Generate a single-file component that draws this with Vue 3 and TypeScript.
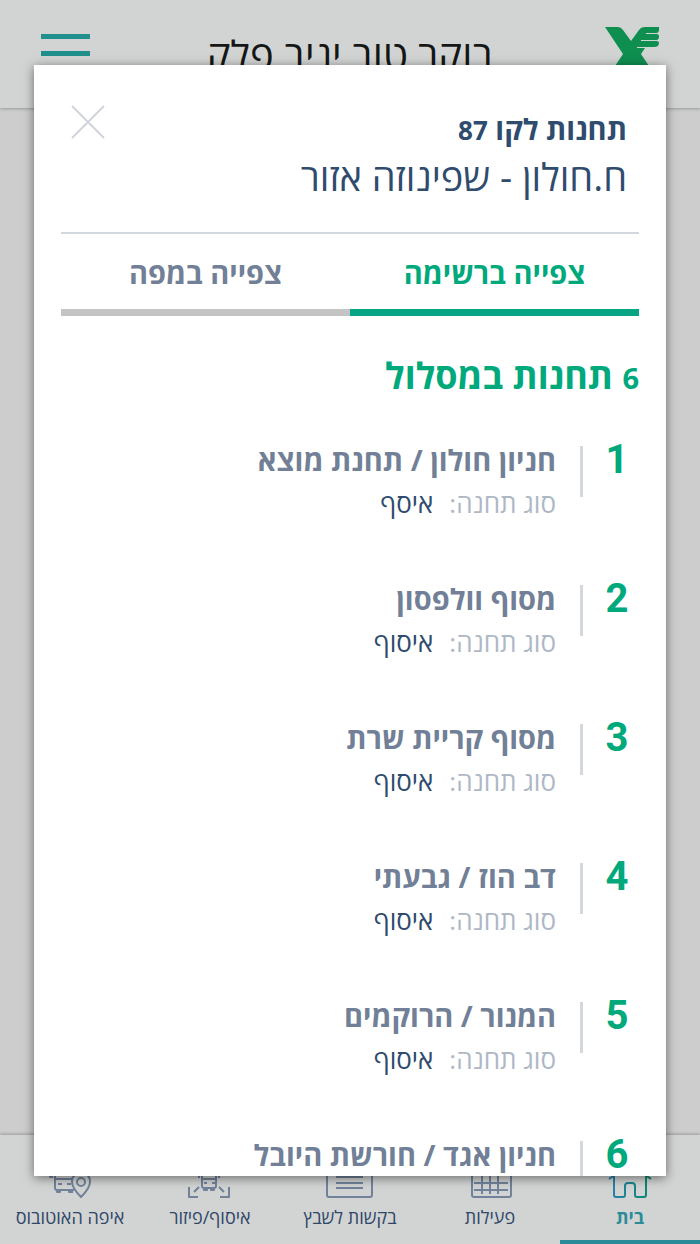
<script setup lang="ts">
import { ref } from 'vue'

interface Stop {
  name: string
  type?: string
}

const stops: Stop[] = [
  { name: 'חניון חולון / תחנת מוצא', type: 'איסף' },
  { name: 'מסוף וולפסון', type: 'איסוף' },
  { name: 'מסוף קריית שרת', type: 'איסוף' },
  { name: 'דב הוז / גבעתי', type: 'איסוף' },
  { name: 'המנור / הרוקמים', type: 'איסוף' },
  { name: 'חניון אגד / חורשת היובל' },
]

const view = ref<'list' | 'map'>('list')
</script>

<template>
  <div class="page" dir="rtl">
    <header class="topbar">
      <svg class="logo" viewBox="0 0 56 50" aria-hidden="true">
        <path d="M1 0H14Q17 0 19 3L27 14L35 3Q37 0 41 0H55V3Q55 6 51 6.500Q55 7 55 9V10Q55 13 51 13.500Q55 14 55 16Q55 20 50 20H41V21L37 27L51 48H37L28 42L19 48H5L19 27Z" fill="#0e8f50" />
        <path d="M42 6.500H55M37 13.500H55M33 20.500H42" stroke="#d2d4d3" stroke-width="1" />
      </svg>
      <h1 class="greeting">בוקר טוב יניב פלק</h1>
      <button class="menu" type="button" aria-label="תפריט">
        <span></span><span></span><span></span>
      </button>
    </header>

    <main class="backdrop"></main>

    <nav class="bottom">
      <a href="#home" class="active">
        <svg viewBox="0 0 44 36" aria-hidden="true">
          <defs>
            <linearGradient id="home-line" x1="0" x2="1" y1="0" y2="0">
              <stop offset="0" stop-color="#2c7fb0" /><stop offset="1" stop-color="#078b69" />
            </linearGradient>
          </defs>
          <path d="M1 17L22 2L43 17M6 12V33Q6 35 8 35H15Q17 35 17 33V24Q17 21 20 21H24Q27 21 27 24V33Q27 35 29 35H36Q38 35 38 33V12" stroke="url(#home-line)" />
        </svg>
        <span>בית</span>
      </a>
      <a href="#activities">
        <svg viewBox="0 0 44 36" aria-hidden="true">
          <path d="M6 4H41Q43 4 43 6V33Q43 35 41 35H6Q4 35 4 33V6Q4 4 6 4ZM4 11H43M6 21H40M6 28H40M14 14V32M22 14V32M30 14V32" />
        </svg>
        <span>פעילות</span>
      </a>
      <a href="#requests">
        <svg class="wide" viewBox="0 0 48 36" aria-hidden="true">
          <path d="M3 2H44Q46 2 46 4V33Q46 35 44 35H3Q1 35 1 33V4Q1 2 3 2ZM10 9H37M10 15H37M10 21H37M10 26H37" />
        </svg>
        <span>בקשות לשבץ</span>
      </a>
      <a href="#pickup">
        <svg viewBox="0 0 44 36" aria-hidden="true">
          <path d="M1 11V2H10M32 2H41V11M1 25V35H10M6 30L11 25M41 25V35H32M36 30L31 25M14 6H28V24Q28 26 26 26H16Q14 26 14 24ZM14 17H28M16 21H19M24 21H27M16 26V28H19V26M23 26V28H26V26M11 12V16M31 12V16" />
        </svg>
        <span>איסוף/פיזור</span>
      </a>
      <a href="#where">
        <svg viewBox="0 0 44 36" aria-hidden="true">
          <path d="M26 28H9Q7 28 7 26V7H26M7 17H24M10 22H14M19 22H23M9 28V30H12V28M21 28V30H25M2 11V15H5M33 35Q24 26 24 20Q24 11 33 11Q42 11 42 20Q42 26 33 35Z" />
          <circle cx="33" cy="20" r="4" />
        </svg>
        <span>איפה האוטובוס</span>
      </a>
    </nav>

    <section class="dialog" role="dialog" aria-modal="true" aria-labelledby="line-title">
      <div class="head">
        <div>
          <h2 id="line-title" class="title">תחנות לקו <span class="digits">87</span></h2>
          <p class="route">ח.חולון - שפינוזה אזור</p>
        </div>
        <button class="close" type="button" aria-label="סגירה">
          <svg viewBox="0 0 34 34" aria-hidden="true"><path d="M1 1L33 33M33 1L1 33" /></svg>
        </button>
      </div>
      <div class="tabs" role="tablist">
        <button type="button" role="tab" :class="{ selected: view === 'list' }" :aria-selected="view === 'list'" @click="view = 'list'">צפייה ברשימה</button>
        <button type="button" role="tab" :class="{ selected: view === 'map' }" :aria-selected="view === 'map'" @click="view = 'map'">צפייה במפה</button>
      </div>
      <h3 class="count"><span class="digits">{{ stops.length }}</span> תחנות במסלול</h3>
      <ol class="stops">
        <li v-for="(stop, i) in stops" :key="stop.name">
          <span class="number">{{ i + 1 }}</span>
          <div class="info">
            <h4>{{ stop.name }}</h4>
            <p v-if="stop.type"><span class="label">סוג תחנה:</span><span>{{ stop.type }}</span></p>
          </div>
        </li>
      </ol>
    </section>
  </div>
</template>

<style>
body {
  margin: 0;
  background: #cdcdcd;
}
</style>

<style scoped>
* {
  box-sizing: border-box;
  margin: 0;
  padding: 0;
}
.page {
  position: relative;
  display: flex;
  flex-direction: column;
  height: 100vh;
  overflow: hidden;
  color: #2f4b6e;
  font-family: "Open Sans", "Noto Sans", "Liberation Sans", sans-serif;
}
button {
  border: 0;
  background: none;
  font: inherit;
  cursor: pointer;
}
.topbar {
  display: grid;
  grid-template-columns: 60px 1fr 60px;
  align-items: start;
  height: 108px;
  padding: 27px 40px 0;
  background: #d2d4d3;
  box-shadow: 0 1px 3px rgba(0, 0, 0, 0.25);
}
.logo {
  width: 56px;
  height: 50px;
}
.greeting {
  color: #151716;
  font-size: 40px;
  font-weight: 400;
  line-height: 56px;
  text-align: center;
  white-space: nowrap;
}
.menu {
  display: flex;
  flex-direction: column;
  justify-self: end;
  gap: 12px;
  width: 49px;
  margin: 7px 10px 0 1px;
}
.menu span {
  height: 5px;
  background: #20908c;
}
.backdrop {
  flex: 1;
}
.bottom {
  display: flex;
  height: 109px;
  background: #d2d4d3;
  box-shadow: 0 -1px 3px rgba(0, 0, 0, 0.25);
}
.bottom a {
  display: flex;
  flex: 1;
  flex-direction: column;
  align-items: center;
  padding-top: 27px;
  border-bottom: 4px solid transparent;
  color: #2f4769;
  font-size: 18px;
  line-height: 24px;
  text-decoration: none;
  white-space: nowrap;
}
.bottom a.active {
  border-color: #2b8b99;
  color: #2b8b99;
  font-weight: 700;
}
.bottom svg {
  width: 44px;
  height: 36px;
  margin-bottom: 7px;
  fill: none;
  stroke: #71829a;
  stroke-width: 2;
  stroke-linejoin: round;
}
.bottom svg.wide {
  width: 48px;
}
.dialog {
  position: absolute;
  inset: 65px 34px 68px;
  padding: 0 27px;
  overflow-y: auto;
  scrollbar-width: none;
  background: #fff;
  box-shadow: 0 2px 10px rgba(0, 0, 0, 0.5);
}
.head {
  display: flex;
  justify-content: space-between;
  align-items: flex-start;
  height: 169px;
  padding: 40px 12px 0 10px;
  border-bottom: 2px solid #d3d8df;
}
.title {
  font-size: 29px;
  font-weight: 700;
  line-height: 48px;
}
.title .digits {
  font-size: 26px;
}
.route {
  font-size: 38px;
  line-height: 44px;
}
.close {
  width: 34px;
  height: 34px;
}
.close svg {
  display: block;
  fill: none;
  stroke: #d0d5dc;
  stroke-width: 2;
}
.tabs {
  display: flex;
}
.tabs button {
  flex: 1;
  height: 82px;
  padding-top: 2px;
  border-bottom: 7px solid #c4c4c4;
  color: #718096;
  font-size: 29px;
  font-weight: 700;
}
.tabs button.selected {
  border-color: #08a585;
  color: #00a97c;
}
.count {
  margin-top: 36px;
  color: #00a97c;
  font-size: 36px;
  font-weight: 700;
  line-height: 48px;
}
.count .digits {
  font-size: 29px;
}
.stops {
  list-style: none;
  padding-top: 44px;
}
.stops li {
  display: flex;
  height: 139px;
}
.number {
  width: 56px;
  height: 36px;
  margin-top: -4px;
  padding-inline-end: 12px;
  color: #00a97c;
  font-family: Roboto, sans-serif;
  font-size: 40px;
  font-weight: 700;
  line-height: 36px;
  text-align: center;
}
.info {
  display: flow-root;
  height: 51px;
  padding-inline-start: 24px;
  border-inline-start: 3px solid #d3d8df;
}
.info h4 {
  margin-top: -7px;
  color: #718096;
  font-size: 29px;
  font-weight: 700;
  line-height: 42px;
  white-space: nowrap;
}
.info p {
  display: flex;
  gap: 16px;
  font-size: 26px;
  line-height: 44px;
}
.label {
  color: #aeb8c5;
}
</style>
